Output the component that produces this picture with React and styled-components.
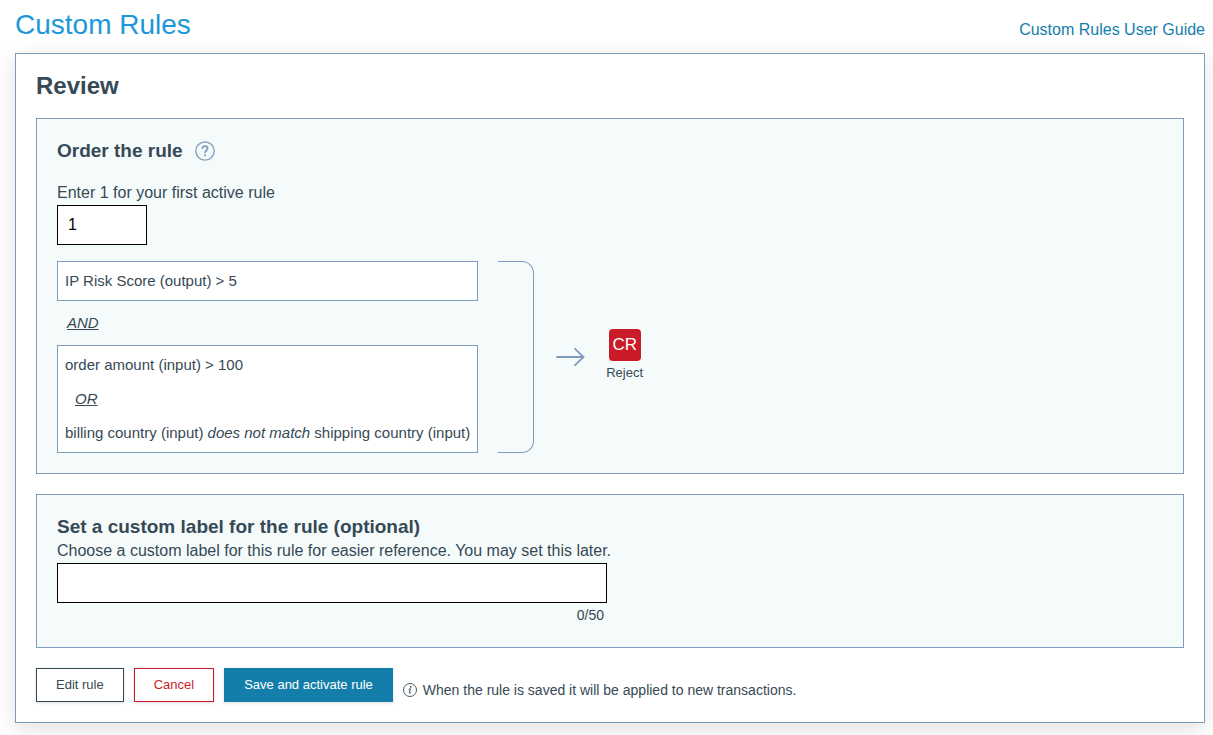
import React, { useState } from "react";
import styled, { createGlobalStyle, css } from "styled-components";

const ink = "#364955";
const line = "#7f9cbf";
const teal = "#147eaa";
const red = "#cc1b28";

const GlobalStyle = createGlobalStyle`
  *, *::before, *::after { box-sizing: border-box; }
  body {
    margin: 0;
    background: #fff;
    color: ${ink};
    font: 16px/24px "Liberation Sans", Arial, sans-serif;
  }
  h1, h2, h3, p { margin: 0; }
`;

const Page = styled.main`
  padding: 8px 8px 12px 15px;
`;

const Header = styled.header`
  display: flex;
  justify-content: space-between;
  align-items: flex-end;
  height: 34px;
  margin-bottom: 11px;
`;

const Title = styled.h1`
  font-size: 28px;
  line-height: 34px;
  font-weight: 400;
  color: #1c98d8;
`;

const GuideLink = styled.a`
  color: ${teal};
  text-decoration: none;
`;

const Card = styled.section`
  padding: 20px;
  border: 1px solid ${line};
  background: #fff;
  box-shadow: 0 6px 20px rgba(0, 0, 0, 0.12);
`;

const CardTitle = styled.h2`
  margin-bottom: 20px;
  font-size: 24px;
  line-height: 24px;
`;

const Panel = styled.section`
  margin-bottom: 20px;
  padding: 20px;
  border: 1px solid ${line};
  background: #f5fbfb;
`;

const PanelHeading = styled.div`
  display: flex;
  align-items: center;
  gap: 12px;
  margin-bottom: ${(p) => (p.$spaced ? "18px" : "0")};
`;

const PanelTitle = styled.h3`
  font-size: 19px;
  line-height: 24px;
`;

const HelpButton = styled.button`
  display: flex;
  padding: 0;
  border: 0;
  background: none;
  color: ${line};
  cursor: pointer;
`;

const Field = styled.div`
  display: flex;
  flex-direction: column;
  max-width: ${(p) => p.$width};
`;

const Label = styled.label`
  white-space: nowrap;
`;

const TextInput = styled.input`
  width: 100%;
  height: 40px;
  padding: 0 10px;
  border: 1px solid #000;
  border-radius: 0;
  background: #fff;
  color: #000;
  font: inherit;
`;

const Counter = styled.span`
  padding-right: 3px;
  font-size: 14px;
  text-align: right;
`;

const RuleFlow = styled.div`
  display: flex;
  align-items: center;
  margin-top: 16px;
`;

const Conditions = styled.div`
  display: flex;
  flex-direction: column;
  font-size: 15px;
  line-height: 34px;
`;

const ConditionBox = styled.div`
  padding: 2px 7px;
  border: 1px solid ${line};
  background: #fff;
`;

const Operator = styled.p`
  padding: 0 10px;
  line-height: ${(p) => (p.$outer ? "44px" : "34px")};
  font-style: italic;
  text-decoration: underline;
`;

const Bracket = styled.div`
  align-self: stretch;
  width: 36px;
  margin: 0 22px 0 20px;
  border: 1px solid ${line};
  border-left: 0;
  border-radius: 0 12px 12px 0;
`;

const Outcome = styled.div`
  display: flex;
  flex-direction: column;
  align-items: center;
  margin-left: 20px;
  font-size: 13px;
`;

const Badge = styled.span`
  width: 32px;
  border-radius: 4px;
  background: ${red};
  color: #fff;
  font-size: 17px;
  line-height: 32px;
  text-align: center;
`;

const Actions = styled.div`
  display: flex;
  gap: 10px;
`;

const variants = {
  outline: css`
    border-color: ${ink};
    background: #fff;
    color: ${ink};
  `,
  danger: css`
    border-color: ${red};
    background: #fff;
    color: ${red};
  `,
  primary: css`
    border-color: ${teal};
    background: ${teal};
    color: #fff;
  `,
};

const Button = styled.button`
  height: 34px;
  padding: 0 19px;
  border: 1px solid;
  box-shadow: 0 1px 3px rgba(0, 0, 0, 0.14);
  font: 13px/32px "Liberation Sans", Arial, sans-serif;
  cursor: pointer;
  ${(p) => variants[p.$variant]}
`;

const Note = styled.p`
  display: flex;
  align-items: center;
  gap: 6px;
  padding-top: 10px;
  font-size: 14px;
`;

const HelpIcon = () => (
  <svg width="20" height="20" viewBox="0 0 20 20" fill="none" stroke="currentColor" aria-hidden="true">
    <circle cx="10" cy="10" r="9.2" strokeWidth="1.3" />
    <path d="M7.200 7.700c0-1.700 1.200-2.500 2.700-2.500s2.700 0.800 2.700 2.300c0 2-2.600 2-2.600 4.400" strokeWidth="1.700" />
    <circle cx="10" cy="14.300" r="1.100" fill="currentColor" stroke="none" />
  </svg>
);

const ArrowIcon = () => (
  <svg width="30" height="20" viewBox="0 0 30 20" fill="none" stroke={line} strokeWidth="1.800" strokeLinecap="round" aria-hidden="true">
    <path d="M1 10H27.500M19 1.800L27.500 10L19 18.200" />
  </svg>
);

const InfoIcon = () => (
  <svg width="14" height="14" viewBox="0 0 14 14" fill="none" stroke={ink} aria-hidden="true">
    <circle cx="7" cy="7" r="6.500" strokeWidth="0.900" />
    <circle cx="7.700" cy="3.800" r="0.900" fill={ink} stroke="none" />
    <path d="M5.700 6.200L7.400 5.800L6.400 9.700C6.300 10.500 7.100 10.400 7.900 9.500" strokeWidth="1" />
  </svg>
);

export default function App() {
  const [order, setOrder] = useState("1");
  const [label, setLabel] = useState("");

  return (
    <>
      <GlobalStyle />
      <Page>
        <Header>
          <Title>Custom Rules</Title>
          <GuideLink href="#guide">Custom Rules User Guide</GuideLink>
        </Header>
        <Card>
          <CardTitle>Review</CardTitle>

          <Panel>
            <PanelHeading $spaced>
              <PanelTitle>Order the rule</PanelTitle>
              <HelpButton type="button" aria-label="Help">
                <HelpIcon />
              </HelpButton>
            </PanelHeading>
            <Field $width="90px">
              <Label htmlFor="order">Enter 1 for your first active rule</Label>
              <TextInput id="order" value={order} onChange={(e) => setOrder(e.target.value)} />
            </Field>
            <RuleFlow>
              <Conditions>
                <ConditionBox>
                  <p>IP Risk Score (output) &gt; 5</p>
                </ConditionBox>
                <Operator $outer>AND</Operator>
                <ConditionBox>
                  <p>order amount (input) &gt; 100</p>
                  <Operator>OR</Operator>
                  <p>
                    billing country (input) <em>does not match</em> shipping country (input)
                  </p>
                </ConditionBox>
              </Conditions>
              <Bracket />
              <ArrowIcon />
              <Outcome>
                <Badge>CR</Badge>
                <span>Reject</span>
              </Outcome>
            </RuleFlow>
          </Panel>

          <Panel>
            <PanelHeading>
              <PanelTitle>Set a custom label for the rule (optional)</PanelTitle>
            </PanelHeading>
            <Field $width="550px">
              <Label htmlFor="label">
                Choose a custom label for this rule for easier reference. You may set this later.
              </Label>
              <TextInput id="label" maxLength={50} value={label} onChange={(e) => setLabel(e.target.value)} />
              <Counter>{label.length}/50</Counter>
            </Field>
          </Panel>

          <Actions>
            <Button type="button" $variant="outline">Edit rule</Button>
            <Button type="button" $variant="danger">Cancel</Button>
            <Button type="button" $variant="primary">Save and activate rule</Button>
            <Note>
              <InfoIcon />
              When the rule is saved it will be applied to new transactions.
            </Note>
          </Actions>
        </Card>
      </Page>
    </>
  );
}
